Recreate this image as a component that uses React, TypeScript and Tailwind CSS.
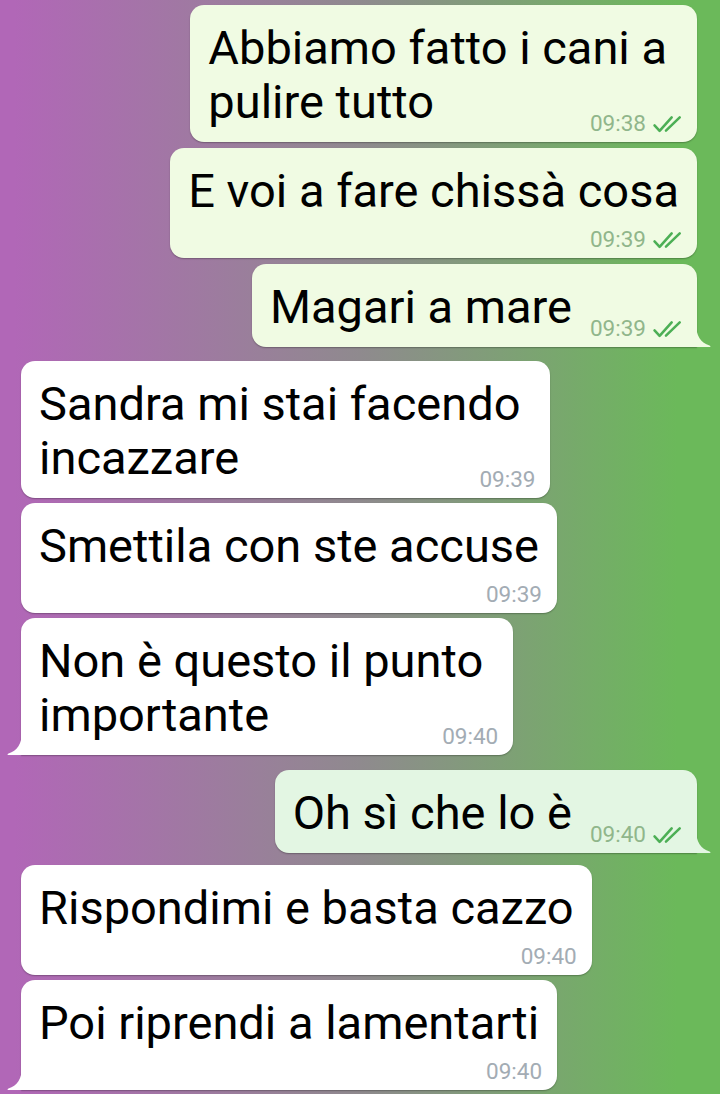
import React from "react";

type Msg = {
  out: boolean;
  lines: string[];
  time: string;
  mode: "wrap" | "below" | "inline";
  tail?: boolean;
  mt: string;
  tint?: string;
};

const messages: Msg[] = [
  { out: true, lines: ["Abbiamo fatto i cani a", "pulire tutto"], time: "09:38", mode: "wrap", mt: "mt-[5px]" },
  { out: true, lines: ["E voi a fare chissà cosa"], time: "09:39", mode: "below", mt: "mt-[6px]" },
  { out: true, lines: ["Magari a mare"], time: "09:39", mode: "inline", tail: true, mt: "mt-[6px]" },
  { out: false, lines: ["Sandra mi stai facendo", "incazzare"], time: "09:39", mode: "wrap", mt: "mt-[14px]" },
  { out: false, lines: ["Smettila con ste accuse"], time: "09:39", mode: "below", mt: "mt-[5px]" },
  { out: false, lines: ["Non è questo il punto", "importante"], time: "09:40", mode: "wrap", tail: true, mt: "mt-[5px]" },
  { out: true, lines: ["Oh sì che lo è"], time: "09:40", mode: "inline", tail: true, mt: "mt-[15px]", tint: "bg-[#e3f6e3]" },
  { out: false, lines: ["Rispondimi e basta cazzo"], time: "09:40", mode: "below", mt: "mt-[12px]" },
  { out: false, lines: ["Poi riprendi a lamentarti"], time: "09:40", mode: "below", tail: true, mt: "mt-[5px]" },
];

const Checks = () => (
  <svg width="33" height="18" viewBox="0 0 30 17" fill="none" className="ml-[6px]">
    <path d="M1.8 9.8 L6.6 15 L18 2.2" stroke="#4caf55" strokeWidth="2.4" strokeLinecap="round" strokeLinejoin="round" />
    <path d="M12.6 14.8 L25.6 2.2" stroke="#4caf55" strokeWidth="2.4" strokeLinecap="round" />
  </svg>
);

const Time = ({ m }: { m: Msg }) => (
  <div className={`flex items-end h-[20px] ${m.out ? "-mr-[6px]" : "-mr-[3px]"}`}>
    <span className={`text-[22.5px] leading-[20px] ${m.out ? "text-[#90b68b]" : "text-[#a3acb4]"}`}>{m.time}</span>
    {m.out && <Checks />}
  </div>
);

const Tail = ({ out, color }: { out: boolean; color: string }) =>
  out ? (
    <svg width="16" height="24" viewBox="0 0 16 24" className="absolute -right-[15px] bottom-0">
      <path d="M0 0 C0 13 5 20 13.5 22.4 Q15.5 23.2 14 24 L0 24 Z" fill={color} />
    </svg>
  ) : (
    <svg width="16" height="24" viewBox="0 0 16 24" className="absolute -left-[15px] bottom-0">
      <path d="M16 0 C16 13 11 20 2.5 22.4 Q0.5 23.2 2 24 L16 24 Z" fill={color} />
    </svg>
  );

const Bubble = ({ m }: { m: Msg }) => {
  const bg = m.out ? m.tint ?? "bg-[#f0fbe3]" : "bg-white";
  const tailColor = m.out ? (m.tint ? "#e3f6e3" : "#f0fbe3") : "#ffffff";
  const corners = m.tail ? (m.out ? "rounded-[14px] rounded-br-none" : "rounded-[14px] rounded-bl-none") : "rounded-[14px]";
  const pr = m.mode === "wrap" ? "pr-[30px]" : "pr-[18px]";

  return (
    <div className={`flex ${m.out ? "justify-end pr-[23px]" : "justify-start pl-[21px]"} ${m.mt}`}>
      <div className={`relative ${bg} ${corners} shadow-[0_1px_1.5px_rgba(0,0,0,0.28)] pl-[18px] ${pr} pt-[16px] pb-[9px]`}>
        {m.mode === "inline" ? (
          <div className="flex items-end">
            <div className="text-[47px] leading-[54px] mb-[4px] whitespace-nowrap">{m.lines[0]}</div>
            <div className="ml-[18px]">
              <Time m={m} />
            </div>
          </div>
        ) : (
          <>
            <div className="text-[47px] leading-[54px] whitespace-nowrap">
              {m.lines.map((l, i) => (
                <div key={i}>{l}</div>
              ))}
            </div>
            <div className={`flex justify-end ${m.mode === "wrap" ? "-mt-[16px] -mr-[12px]" : "mt-[11px]"}`}>
              <Time m={m} />
            </div>
          </>
        )}
        {m.tail && <Tail out={m.out} color={tailColor} />}
      </div>
    </div>
  );
};

export default function App() {
  return (
    <div className="w-[720px] h-[1094px] overflow-hidden bg-[linear-gradient(to_right,#b167b7_2%,#8f8a8e_50%,#6bb95a_94%)] font-['Roboto',sans-serif] text-black">
      {messages.map((m, i) => (
        <Bubble key={i} m={m} />
      ))}
    </div>
  );
}
